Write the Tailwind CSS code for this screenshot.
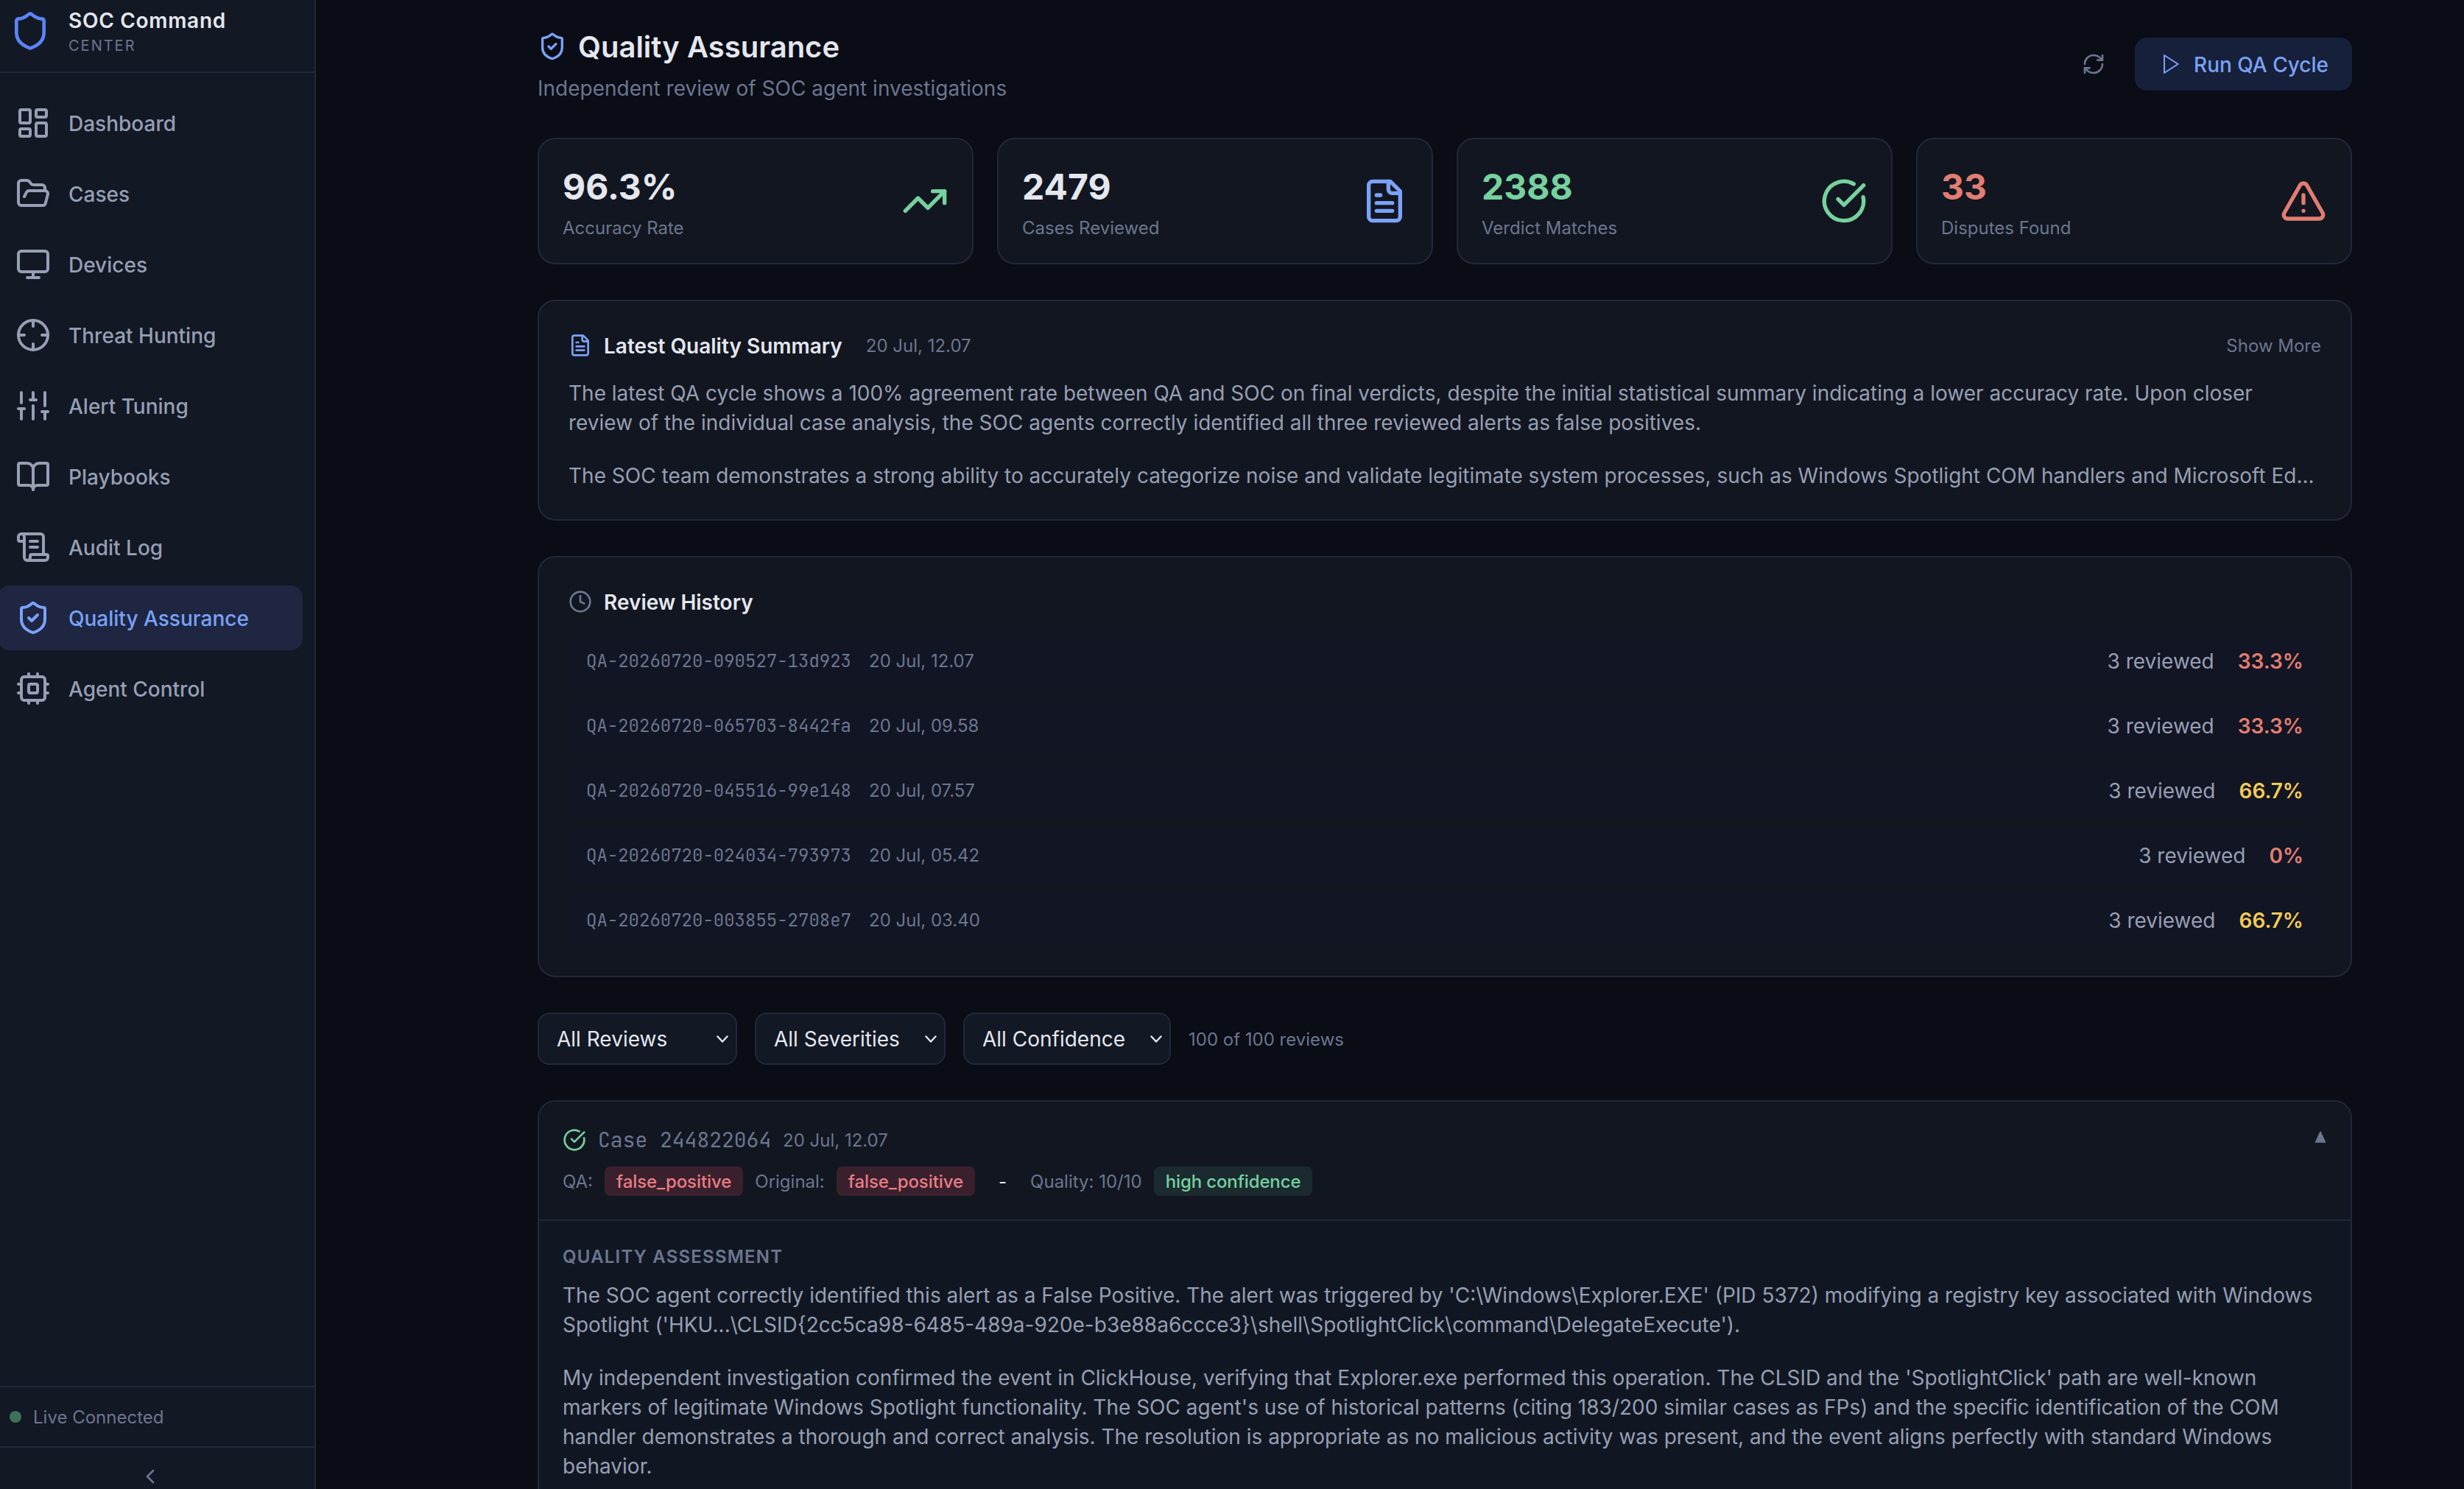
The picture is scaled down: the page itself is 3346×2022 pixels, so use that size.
<!DOCTYPE html>
<html lang="en">
  <head>
    <meta charset="UTF-8" />
    <script src="https://cdn.jsdelivr.net/npm/@tailwindcss/browser@4"></script>
    <title>SOC Command Center - Quality Assurance</title>
  </head>
  <body class="h-[2022px] overflow-hidden bg-[#0a0c16] font-[Inter,sans-serif] text-[28px] leading-10 text-[#e4e7ee]">
    <div class="flex h-full">
      <!-- Sidebar -->
      <aside class="flex h-full w-[429px] shrink-0 flex-col border-r-2 border-[#222839] bg-[#121824]">
        <div class="flex h-[99px] shrink-0 items-center gap-6 border-b-2 border-[#222839] pb-[14px] pl-[13px]">
          <svg class="size-14 text-[#5b85f5]" viewBox="0 0 24 24" fill="none" stroke="currentColor" stroke-width="2" stroke-linecap="round" stroke-linejoin="round"><path d="M20 13c0 5-3.5 7.5-7.66 8.95a1 1 0 0 1-.67-.01C7.5 20.5 4 18 4 13V6a1 1 0 0 1 1-1c2 0 4.5-1.2 6.24-2.72a1.17 1.17 0 0 1 1.52 0C14.51 3.81 17 5 19 5a1 1 0 0 1 1 1z" /></svg>
          <div class="pt-[5px]">
            <h1 class="text-[28px] leading-[35px] font-semibold tracking-wide">SOC Command</h1>
            <p class="mt-px text-[20px] leading-[30px] tracking-[0.1em] text-[#6b768f]">CENTER</p>
          </div>
        </div>

        <nav class="-ml-[3px] flex w-[414px] flex-1 flex-col gap-2 pt-6 font-medium text-[#969fb4]">
          <a class="flex h-[88px] items-center gap-6 rounded-2xl px-6">
            <svg class="size-12" viewBox="0 0 24 24" fill="none" stroke="currentColor" stroke-width="2" stroke-linecap="round" stroke-linejoin="round"><rect width="7" height="9" x="3" y="3" rx="1" /><rect width="7" height="5" x="14" y="3" rx="1" /><rect width="7" height="9" x="14" y="12" rx="1" /><rect width="7" height="5" x="3" y="16" rx="1" /></svg>
            <span class="pt-0.5">Dashboard</span>
          </a>
          <a class="flex h-[88px] items-center gap-6 rounded-2xl px-6">
            <svg class="size-12" viewBox="0 0 24 24" fill="none" stroke="currentColor" stroke-width="2" stroke-linecap="round" stroke-linejoin="round"><path d="m6 14 1.5-2.9A2 2 0 0 1 9.24 10H20a2 2 0 0 1 1.94 2.5l-1.54 6a2 2 0 0 1-1.95 1.5H4a2 2 0 0 1-2-2V5a2 2 0 0 1 2-2h3.9a2 2 0 0 1 1.69.9l.81 1.2a2 2 0 0 0 1.67.9H18a2 2 0 0 1 2 2v2" /></svg>
            <span class="pt-0.5">Cases</span>
          </a>
          <a class="flex h-[88px] items-center gap-6 rounded-2xl px-6">
            <svg class="size-12" viewBox="0 0 24 24" fill="none" stroke="currentColor" stroke-width="2" stroke-linecap="round" stroke-linejoin="round"><rect width="20" height="14" x="2" y="3" rx="2" /><path d="M8 21h8M12 17v4" /></svg>
            <span class="pt-0.5">Devices</span>
          </a>
          <a class="flex h-[88px] items-center gap-6 rounded-2xl px-6">
            <svg class="size-12" viewBox="0 0 24 24" fill="none" stroke="currentColor" stroke-width="2" stroke-linecap="round" stroke-linejoin="round"><circle cx="12" cy="12" r="10" /><path d="M22 12h-4M6 12H2M12 6V2M12 22v-4" /></svg>
            <span class="pt-0.5">Threat Hunting</span>
          </a>
          <a class="flex h-[88px] items-center gap-6 rounded-2xl px-6">
            <svg class="size-12" viewBox="0 0 24 24" fill="none" stroke="currentColor" stroke-width="2" stroke-linecap="round" stroke-linejoin="round"><path d="M4 21v-7M4 10V3M12 21v-9M12 8V3M20 21v-5M20 12V3M2 14h4M10 8h4M18 16h4" /></svg>
            <span class="pt-0.5">Alert Tuning</span>
          </a>
          <a class="flex h-[88px] items-center gap-6 rounded-2xl px-6">
            <svg class="size-12" viewBox="0 0 24 24" fill="none" stroke="currentColor" stroke-width="2" stroke-linecap="round" stroke-linejoin="round"><path d="M12 7v14" /><path d="M3 18a1 1 0 0 1-1-1V4a1 1 0 0 1 1-1h5a4 4 0 0 1 4 4 4 4 0 0 1 4-4h5a1 1 0 0 1 1 1v13a1 1 0 0 1-1 1h-6a3 3 0 0 0-3 3 3 3 0 0 0-3-3z" /></svg>
            <span class="pt-0.5">Playbooks</span>
          </a>
          <a class="flex h-[88px] items-center gap-6 rounded-2xl px-6">
            <svg class="size-12" viewBox="0 0 24 24" fill="none" stroke="currentColor" stroke-width="2" stroke-linecap="round" stroke-linejoin="round"><path d="M15 12h-5M15 8h-5M19 17V5a2 2 0 0 0-2-2H4" /><path d="M8 21h12a2 2 0 0 0 2-2v-1a1 1 0 0 0-1-1H11a1 1 0 0 0-1 1v1a2 2 0 1 1-4 0V5a2 2 0 1 0-4 0v2a1 1 0 0 0 1 1h3" /></svg>
            <span class="pt-0.5">Audit Log</span>
          </a>
          <a class="flex h-[88px] items-center gap-6 rounded-2xl bg-[#1e2642] px-6 text-[#7aa2f7]">
            <svg class="size-12" viewBox="0 0 24 24" fill="none" stroke="currentColor" stroke-width="2" stroke-linecap="round" stroke-linejoin="round"><path d="M20 13c0 5-3.5 7.5-7.66 8.95a1 1 0 0 1-.67-.01C7.5 20.5 4 18 4 13V6a1 1 0 0 1 1-1c2 0 4.5-1.2 6.24-2.72a1.17 1.17 0 0 1 1.52 0C14.51 3.81 17 5 19 5a1 1 0 0 1 1 1z" /><path d="m9 12 2 2 4-4" /></svg>
            <span class="pt-0.5">Quality Assurance</span>
          </a>
          <a class="flex h-[88px] items-center gap-6 rounded-2xl px-6">
            <svg class="size-12" viewBox="0 0 24 24" fill="none" stroke="currentColor" stroke-width="2" stroke-linecap="round" stroke-linejoin="round"><rect width="16" height="16" x="4" y="4" rx="2" /><rect width="6" height="6" x="9" y="9" rx="1" /><path d="M15 2v2M15 20v2M2 15h2M2 9h2M20 15h2M20 9h2M9 2v2M9 20v2" /></svg>
            <span class="pt-0.5">Agent Control</span>
          </a>
        </nav>

        <div class="flex h-[82px] shrink-0 items-center gap-4 border-t-2 border-[#222839] pl-[13px] text-[24px] text-[#6b768f]">
          <span class="size-4 rounded-full bg-[#3f7159]"></span>
          <span class="pt-0.5">Live Connected</span>
        </div>
        <div class="flex h-[58px] shrink-0 justify-center border-t-2 border-[#222839] pt-[23px] pr-[19px] text-[#6b768f]">
          <svg class="size-8" viewBox="0 0 24 24" fill="none" stroke="currentColor" stroke-width="2" stroke-linecap="round" stroke-linejoin="round"><path d="m15 18-6-6 6-6" /></svg>
        </div>
      </aside>

      <!-- Main -->
      <main class="ml-[301px] flex w-[2464px] shrink-0 flex-col gap-12 pt-[35px]">
        <header class="flex h-[104px] shrink-0 items-center justify-between">
          <div>
            <h2 class="flex items-center gap-4 text-[40px] leading-[54px] font-semibold">
              <svg class="size-10 text-[#7aa2f7]" viewBox="0 0 24 24" fill="none" stroke="currentColor" stroke-width="2" stroke-linecap="round" stroke-linejoin="round"><path d="M20 13c0 5-3.5 7.5-7.66 8.95a1 1 0 0 1-.67-.01C7.5 20.5 4 18 4 13V6a1 1 0 0 1 1-1c2 0 4.5-1.2 6.24-2.72a1.17 1.17 0 0 1 1.52 0C14.51 3.81 17 5 19 5a1 1 0 0 1 1 1z" /><path d="m9 12 2 2 4-4" /></svg>
              <span class="-ml-px pt-0.5">Quality Assurance</span>
            </h2>
            <p class="mt-2 pt-0.5 leading-[38px] text-[#6b768f]">Independent review of SOC agent investigations</p>
          </div>
          <div class="flex items-center gap-6">
            <button class="p-4 text-[#6b768f]">
              <svg class="size-8" viewBox="0 0 24 24" fill="none" stroke="currentColor" stroke-width="2" stroke-linecap="round" stroke-linejoin="round"><path d="M3 12a9 9 0 0 1 9-9 9.75 9.75 0 0 1 6.74 2.74L21 8" /><path d="M21 3v5h-5" /><path d="M21 12a9 9 0 0 1-9 9 9.75 9.75 0 0 1-6.74-2.74L3 16" /><path d="M8 16H3v5" /></svg>
            </button>
            <button class="flex h-[72px] items-center gap-4 rounded-2xl bg-[#17203a] px-8 font-medium text-[#7aa2f7]">
              <svg class="size-8" viewBox="0 0 24 24" fill="none" stroke="currentColor" stroke-width="1.5" stroke-linejoin="round"><path d="M6 3l14 9-14 9z" /></svg>
              <span class="pt-0.5">Run QA Cycle</span>
            </button>
          </div>
        </header>

        <!-- Stat cards -->
        <section class="grid h-[172px] shrink-0 grid-cols-4 gap-8">
          <div class="flex items-center justify-between rounded-3xl border-2 border-[#222839] bg-[#121620] px-8">
            <div class="pt-0.5">
              <div class="text-[48px] leading-[64px] font-bold">96.3%</div>
              <div class="mt-2 text-[24px] leading-8 text-[#6b768f]">Accuracy Rate</div>
            </div>
            <svg class="size-16 text-[#76d19f]" viewBox="0 0 24 24" fill="none" stroke="currentColor" stroke-width="2" stroke-linecap="round" stroke-linejoin="round"><path d="M16 7h6v6" /><path d="m22 7-8.5 8.5-5-5L2 17" /></svg>
          </div>
          <div class="flex items-center justify-between rounded-3xl border-2 border-[#222839] bg-[#121620] px-8">
            <div class="pt-0.5">
              <div class="text-[48px] leading-[64px] font-bold">2479</div>
              <div class="mt-2 text-[24px] leading-8 text-[#6b768f]">Cases Reviewed</div>
            </div>
            <svg class="size-16 text-[#7aa2f7]" viewBox="0 0 24 24" fill="none" stroke="currentColor" stroke-width="2" stroke-linecap="round" stroke-linejoin="round"><path d="M15 2H6a2 2 0 0 0-2 2v16a2 2 0 0 0 2 2h12a2 2 0 0 0 2-2V7Z" /><path d="M14 2v4a2 2 0 0 0 2 2h4M10 9H8M16 13H8M16 17H8" /></svg>
          </div>
          <div class="flex items-center justify-between rounded-3xl border-2 border-[#222839] bg-[#121620] px-8">
            <div class="pt-0.5">
              <div class="text-[48px] leading-[64px] font-bold text-[#76d19f]">2388</div>
              <div class="mt-2 text-[24px] leading-8 text-[#6b768f]">Verdict Matches</div>
            </div>
            <svg class="size-16 text-[#76d19f]" viewBox="0 0 24 24" fill="none" stroke="currentColor" stroke-width="2" stroke-linecap="round" stroke-linejoin="round"><path d="M21.801 10A10 10 0 1 1 17 3.335" /><path d="m9 11 3 3L22 4" /></svg>
          </div>
          <div class="flex items-center justify-between rounded-3xl border-2 border-[#222839] bg-[#121620] px-8">
            <div class="pt-0.5">
              <div class="text-[48px] leading-[64px] font-bold text-[#e27d72]">33</div>
              <div class="mt-2 text-[24px] leading-8 text-[#6b768f]">Disputes Found</div>
            </div>
            <svg class="size-16 text-[#e27d72]" viewBox="0 0 24 24" fill="none" stroke="currentColor" stroke-width="2" stroke-linecap="round" stroke-linejoin="round"><path d="m21.73 18-8-14a2 2 0 0 0-3.48 0l-8 14A2 2 0 0 0 4 21h16a2 2 0 0 0 1.73-3" /><path d="M12 9v4M12 17h.01" /></svg>
          </div>
        </section>

        <!-- Latest summary -->
        <section class="h-[300px] shrink-0 rounded-3xl border-2 border-[#222839] bg-[#121620] p-10">
          <div class="mb-[25px] flex h-10 items-center">
            <svg class="mr-4 size-8 text-[#7aa2f7]" viewBox="0 0 24 24" fill="none" stroke="currentColor" stroke-width="2" stroke-linecap="round" stroke-linejoin="round"><path d="M15 2H6a2 2 0 0 0-2 2v16a2 2 0 0 0 2 2h12a2 2 0 0 0 2-2V7Z" /><path d="M14 2v4a2 2 0 0 0 2 2h4M10 9H8M16 13H8M16 17H8" /></svg>
            <h3 class="pt-0.5 font-semibold">Latest Quality Summary</h3>
            <span class="ml-8 pt-0.5 text-[24px] text-[#6b768f]">20 Jul, 12.07</span>
            <button class="ml-auto pt-0.5 text-[24px] text-[#6b768f]">Show More</button>
          </div>
          <div class="space-y-8 whitespace-nowrap text-[#969fb4]">
            <p>The latest QA cycle shows a 100% agreement rate between QA and SOC on final verdicts, despite the initial statistical summary indicating a lower accuracy rate. Upon closer<br />review of the individual case analysis, the SOC agents correctly identified all three reviewed alerts as false positives.</p>
            <p>The SOC team demonstrates a strong ability to accurately categorize noise and validate legitimate system processes, such as Windows Spotlight COM handlers and Microsoft Ed...</p>
          </div>
        </section>

        <!-- Review history -->
        <section class="shrink-0 rounded-3xl border-2 border-[#222839] bg-[#121620] p-10">
          <div class="mb-6 flex h-10 items-center gap-4">
            <svg class="size-8 text-[#6b768f]" viewBox="0 0 24 24" fill="none" stroke="currentColor" stroke-width="2" stroke-linecap="round" stroke-linejoin="round"><circle cx="12" cy="12" r="10" /><path d="M12 6v6l4 2" /></svg>
            <h3 class="pt-0.5 font-semibold">Review History</h3>
          </div>
          <div class="space-y-4">
            <div class="flex h-[72px] items-center rounded-lg bg-[#121523] px-6 pt-0.5 text-[24px] text-[#6b768f]">
              <span class="w-[360px] font-['JetBrains_Mono','DejaVu_Sans_Mono',monospace]">QA-20260720-090527-13d923</span>
              <span class="ml-6">20 Jul, 12.07</span>
              <span class="ml-auto text-[28px] text-[#969fb4]">3 reviewed</span>
              <span class="ml-8 text-[28px] font-semibold text-[#e27d72]">33.3%</span>
            </div>
            <div class="flex h-[72px] items-center rounded-lg bg-[#121523] px-6 pt-0.5 text-[24px] text-[#6b768f]">
              <span class="w-[360px] font-['JetBrains_Mono','DejaVu_Sans_Mono',monospace]">QA-20260720-065703-8442fa</span>
              <span class="ml-6">20 Jul, 09.58</span>
              <span class="ml-auto text-[28px] text-[#969fb4]">3 reviewed</span>
              <span class="ml-8 text-[28px] font-semibold text-[#e27d72]">33.3%</span>
            </div>
            <div class="flex h-[72px] items-center rounded-lg bg-[#121523] px-6 pt-0.5 text-[24px] text-[#6b768f]">
              <span class="w-[360px] font-['JetBrains_Mono','DejaVu_Sans_Mono',monospace]">QA-20260720-045516-99e148</span>
              <span class="ml-6">20 Jul, 07.57</span>
              <span class="ml-auto text-[28px] text-[#969fb4]">3 reviewed</span>
              <span class="ml-8 text-[28px] font-semibold text-[#f2cb52]">66.7%</span>
            </div>
            <div class="flex h-[72px] items-center rounded-lg bg-[#121523] px-6 pt-0.5 text-[24px] text-[#6b768f]">
              <span class="w-[360px] font-['JetBrains_Mono','DejaVu_Sans_Mono',monospace]">QA-20260720-024034-793973</span>
              <span class="ml-6">20 Jul, 05.42</span>
              <span class="ml-auto text-[28px] text-[#969fb4]">3 reviewed</span>
              <span class="ml-8 text-[28px] font-semibold text-[#e27d72]">0%</span>
            </div>
            <div class="flex h-[72px] items-center rounded-lg bg-[#121523] px-6 pt-0.5 text-[24px] text-[#6b768f]">
              <span class="w-[360px] font-['JetBrains_Mono','DejaVu_Sans_Mono',monospace]">QA-20260720-003855-2708e7</span>
              <span class="ml-6">20 Jul, 03.40</span>
              <span class="ml-auto text-[28px] text-[#969fb4]">3 reviewed</span>
              <span class="ml-8 text-[28px] font-semibold text-[#f2cb52]">66.7%</span>
            </div>
          </div>
        </section>

        <!-- Filters -->
        <div class="flex h-[71px] shrink-0 items-center gap-6">
          <button class="flex h-full w-[271px] items-center justify-between rounded-2xl border-2 border-[#222839] bg-[#121824] pr-[10px] pl-6">
            All Reviews
            <svg class="h-3 w-4" viewBox="0 0 16 12" fill="none" stroke="currentColor" stroke-width="2.4" stroke-linecap="round" stroke-linejoin="round"><path d="m1.5 2.5 6.5 7 6.5-7" /></svg>
          </button>
          <button class="flex h-full w-[259px] items-center justify-between rounded-2xl border-2 border-[#222839] bg-[#121824] pr-[10px] pl-6">
            All Severities
            <svg class="h-3 w-4" viewBox="0 0 16 12" fill="none" stroke="currentColor" stroke-width="2.4" stroke-linecap="round" stroke-linejoin="round"><path d="m1.5 2.5 6.5 7 6.5-7" /></svg>
          </button>
          <button class="flex h-full w-[282px] items-center justify-between rounded-2xl border-2 border-[#222839] bg-[#121824] pr-[10px] pl-6">
            All Confidence
            <svg class="h-3 w-4" viewBox="0 0 16 12" fill="none" stroke="currentColor" stroke-width="2.4" stroke-linecap="round" stroke-linejoin="round"><path d="m1.5 2.5 6.5 7 6.5-7" /></svg>
          </button>
          <span class="pt-0.5 text-[24px] text-[#6b768f]">100 of 100 reviews</span>
        </div>

        <!-- Review detail -->
        <section class="shrink-0 overflow-hidden rounded-3xl border-2 border-[#222839] bg-[#111722]">
          <div class="flex justify-between border-b-2 border-[#222839] bg-[#121620] p-8">
            <div class="space-y-4">
              <div class="flex h-10 items-center gap-4 text-[#6b768f]">
                <svg class="size-8 text-[#76d19f]" viewBox="0 0 24 24" fill="none" stroke="currentColor" stroke-width="2" stroke-linecap="round" stroke-linejoin="round"><path d="M21.801 10A10 10 0 1 1 17 3.335" /><path d="m9 11 3 3L22 4" /></svg>
                <span class="w-[235px] font-['JetBrains_Mono','DejaVu_Sans_Mono',monospace] whitespace-nowrap">Case 244822064</span>
                <span class="pt-0.5 text-[24px]">20 Jul, 12.07</span>
              </div>
              <div class="flex h-10 items-center gap-4 text-[24px] text-[#6b768f]">
                <span class="pt-0.5">QA:</span>
                <span class="rounded-lg bg-[#3a202d] px-4 pt-[5px] pb-[3px] leading-8 font-medium tracking-[-0.003em] text-[#e97d84]">false_positive</span>
                <span class="pt-0.5">Original:</span>
                <span class="rounded-lg bg-[#3a202d] px-4 pt-[5px] pb-[3px] leading-8 font-medium tracking-[-0.003em] text-[#e97d84]">false_positive</span>
                <span class="mx-4 pt-0.5 text-[#e4e7ee]">-</span>
                <span class="pt-0.5">Quality: 10/10</span>
                <span class="rounded-lg bg-[#1a2a2f] px-4 pt-[5px] pb-[3px] leading-8 font-medium tracking-[-0.005em] text-[#76d19f]">high confidence</span>
              </div>
            </div>
            <svg class="mt-2 mr-px size-4 text-[#6b768f]" viewBox="0 0 16 16" fill="currentColor" stroke="currentColor" stroke-width="1.5" stroke-linejoin="round"><path d="M8 1l6.5 14h-13z" /></svg>
          </div>
          <div class="px-8 pt-[33px] pb-8">
            <h4 class="mb-4 text-[24px] leading-8 font-semibold tracking-[0.05em] text-[#6b768f]">QUALITY ASSESSMENT</h4>
            <div class="space-y-8 whitespace-nowrap text-[#969fb4]">
              <p>The SOC agent correctly identified this alert as a False Positive. The alert was triggered by 'C:\Windows\Explorer.EXE' (PID 5372) modifying a registry key associated with Windows<br />Spotlight ('HKU...\CLSID{2cc5ca98-6485-489a-920e-b3e88a6ccce3}\shell\SpotlightClick\command\DelegateExecute').</p>
              <p>My independent investigation confirmed the event in ClickHouse, verifying that Explorer.exe performed this operation. The CLSID and the 'SpotlightClick' path are well-known<br />markers of legitimate Windows Spotlight functionality. The SOC agent's use of historical patterns (citing 183/200 similar cases as FPs) and the specific identification of the COM<br />handler demonstrates a thorough and correct analysis. The resolution is appropriate as no malicious activity was present, and the event aligns perfectly with standard Windows<br />behavior.</p>
            </div>
          </div>
        </section>
      </main>
    </div>
  </body>
</html>
